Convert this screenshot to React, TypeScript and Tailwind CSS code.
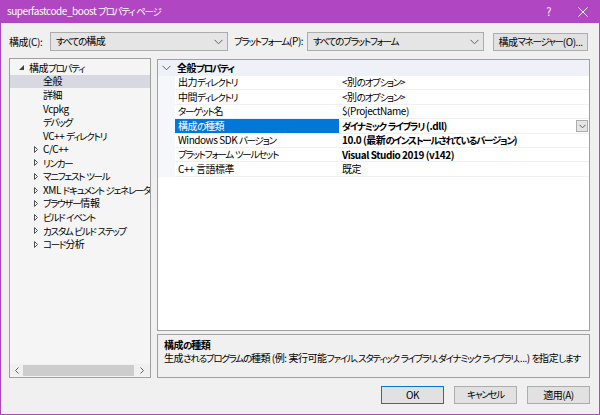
import React from "react";

const FONT =
  "[font-family:'Noto_Sans_CJK_JP',sans-serif] [font-feature-settings:'palt'] text-[10px] tracking-[-0.45px] leading-none";

// kana runs are set tighter, like the narrow kana of the Windows UI font
function J({ t }: { t: string }) {
  const parts = t.split(/([\u3000-\u30ff]+)/);
  return (
    <>
      {parts.map((p, i) =>
        i % 2 === 1 ? (
          <span key={i} className="text-[9.5px] tracking-[-1.25px]">
            {p}
          </span>
        ) : (
          <React.Fragment key={i}>{p}</React.Fragment>
        ),
      )}
    </>
  );
}

const treeItems: { label: string; expandable?: boolean; selected?: boolean }[] = [
  { label: "全般", selected: true },
  { label: "詳細" },
  { label: "Vcpkg" },
  { label: "デバッグ" },
  { label: "VC++ ディレクトリ" },
  { label: "C/C++", expandable: true },
  { label: "リンカー", expandable: true },
  { label: "マニフェスト ツール", expandable: true },
  { label: "XML ドキュメント ジェネレーター", expandable: true },
  { label: "ブラウザー情報", expandable: true },
  { label: "ビルド イベント", expandable: true },
  { label: "カスタム ビルド ステップ", expandable: true },
  { label: "コード分析", expandable: true },
];

const props: { name: string; value: string; bold?: boolean; selected?: boolean }[] = [
  { name: "出力ディレクトリ", value: "<別のオプション>" },
  { name: "中間ディレクトリ", value: "<別のオプション>" },
  { name: "ターゲット名", value: "$(ProjectName)" },
  { name: "構成の種類", value: "ダイナミック ライブラリ (.dll)", bold: true, selected: true },
  { name: "Windows SDK バージョン", value: "10.0 (最新のインストールされているバージョン)", bold: true },
  { name: "プラットフォーム ツールセット", value: "Visual Studio 2019 (v142)", bold: true },
  { name: "C++ 言語標準", value: "既定" },
];

function Chevron() {
  return (
    <svg width="9" height="6" viewBox="0 0 9 6" className="shrink-0">
      <path d="M0.5 0.8 L4.5 4.8 L8.5 0.8" fill="none" stroke="#606060" strokeWidth="1" />
    </svg>
  );
}

function Combo({ text, width }: { text: string; width: string }) {
  return (
    <div className={`${width} shrink-0 h-[19px] bg-[#e5e5e5] border border-[#acacac] flex items-center pl-[5px] pr-[4px]`}>
      <span className="flex-1 whitespace-nowrap">
        <J t={text} />
      </span>
      <Chevron />
    </div>
  );
}

function Btn({ label, w, focused }: { label: string; w: string; focused?: boolean }) {
  return (
    <div
      className={`${w} shrink-0 h-[18px] bg-[#e1e1e1] border ${focused ? "border-[#0078d7]" : "border-[#adadad]"} flex items-center justify-center whitespace-nowrap`}
    >
      <J t={label} />
    </div>
  );
}

export default function App() {
  return (
    <div className={`w-[600px] h-[415px] bg-[#b146c2] flex flex-col text-black ${FONT}`}>
      {/* title bar */}
      <div className="h-[23px] flex items-center pl-[7px] pr-[12px] text-white shrink-0">
        <span className="flex-1 whitespace-nowrap">
          <J t="superfastcode_boost プロパティ ページ" />
        </span>
        <span className="text-[11px] mr-[27px]">?</span>
        <svg width="10" height="10" viewBox="0 0 10 10">
          <path d="M0.5 0.5 L9.5 9.5 M9.5 0.5 L0.5 9.5" stroke="white" strokeWidth="1" />
        </svg>
      </div>

      {/* body */}
      <div className="flex-1 mx-[1px] mb-[1px] bg-[#f0f0f0] flex flex-col pl-[8px] pr-[9px] pt-[9px]">
        {/* top row */}
        <div className="flex items-center h-[19px]">
          <span className="w-[41px] shrink-0 whitespace-nowrap">
            <J t="構成(C):" />
          </span>
          <Combo text="すべての構成" width="w-[178px]" />
          <span className="ml-[6px] w-[73px] shrink-0 whitespace-nowrap">
            <J t="プラットフォーム(P):" />
          </span>
          <Combo text="すべてのプラットフォーム" width="w-[177px]" />
          <div className="ml-[9px]">
            <Btn label="構成マネージャー(O)..." w="w-[95px]" />
          </div>
        </div>

        {/* main */}
        <div className="flex mt-[7px] gap-[6px] h-[320px]">
          {/* tree */}
          <div className="w-[142px] shrink-0 h-[320px] bg-[#f5f5f5] border border-[#a0a0a0] flex flex-col">
            <div className="flex-1 pt-[2px] overflow-hidden">
              <div className="h-[13.6px] flex items-center whitespace-nowrap">
                <svg width="5" height="5" viewBox="0 0 5 5" className="ml-[9px] mr-[5px] shrink-0">
                  <path d="M5 0 L5 5 L0 5 Z" fill="#404040" />
                </svg>
                <span>
                  <J t="構成プロパティ" />
                </span>
              </div>
              {treeItems.map((it) => (
                <div
                  key={it.label}
                  className={`h-[13.6px] flex items-center whitespace-nowrap ${it.selected ? "bg-[#d7d8e2]" : ""}`}
                >
                  <span className="w-[33px] shrink-0 flex justify-end pr-[5px]">
                    {it.expandable && (
                      <svg width="4" height="7" viewBox="0 0 4 7">
                        <path d="M0.5 0.5 L3.5 3.5 L0.5 6.5 Z" fill="none" stroke="#505050" strokeWidth="1" />
                      </svg>
                    )}
                  </span>
                  <span>
                    <J t={it.label} />
                  </span>
                </div>
              ))}
            </div>
            {/* h scrollbar */}
            <div className="h-[12px] mb-[1px] flex items-center bg-[#f0f0f0] shrink-0">
              <span className="w-[13px] flex justify-center">
                <svg width="4" height="7" viewBox="0 0 4 7">
                  <path d="M3.5 0.5 L0.5 3.5 L3.5 6.5" fill="none" stroke="#606060" strokeWidth="1" />
                </svg>
              </span>
              <div className="w-[111px] h-[11px] bg-[#cdcdcd]" />
              <span className="flex-1 flex justify-center">
                <svg width="4" height="7" viewBox="0 0 4 7">
                  <path d="M0.5 0.5 L3.5 3.5 L0.5 6.5" fill="none" stroke="#606060" strokeWidth="1" />
                </svg>
              </span>
            </div>
          </div>

          {/* right side */}
          <div className="flex-1 min-w-0 flex flex-col gap-[3px]">
            {/* property grid */}
            <div className="h-[275px] bg-white border border-[#a0a0a0] flex flex-col mt-[1px]">
              <div className="h-[16px] bg-[#eef1f7] flex items-center font-bold">
                <span className="w-[17px] flex justify-center">
                  <Chevron />
                </span>
                <span className="ml-[2px]">
                  <J t="全般プロパティ" />
                </span>
              </div>
              <div className="flex">
                <div className="w-[17px] bg-[#f5f7fb]" />
                <div className="flex-1 flex flex-col">
                  {props.map((p) => (
                    <div key={p.name} className="h-[14.4px] flex border-b border-[#f0f0f0] whitespace-nowrap">
                      <div
                        className={`w-[164px] shrink-0 flex items-center pl-[3px] ${p.selected ? "bg-[#0078d7] text-white" : ""}`}
                      >
                        <span>
                          <J t={p.name} />
                        </span>
                      </div>
                      <div className="flex-1 flex items-center pl-[3px] relative">
                        <span className={p.bold ? "font-bold" : ""}>
                          <J t={p.value} />
                        </span>
                        {p.selected && (
                          <div className="absolute right-[1px] top-[1px] w-[12px] h-[12px] bg-[#e5e5e5] border border-[#acacac] flex items-center justify-center">
                            <svg width="7" height="5" viewBox="0 0 7 5">
                              <path d="M0.5 0.8 L3.5 3.8 L6.5 0.8" fill="none" stroke="#606060" strokeWidth="1" />
                            </svg>
                          </div>
                        )}
                      </div>
                    </div>
                  ))}
                </div>
              </div>
            </div>

            {/* description */}
            <div className="h-[44px] bg-[#f0f0f0] border border-[#a0a0a0] px-[6px] pt-[3px] whitespace-nowrap overflow-hidden">
              <div className="font-bold h-[13px] flex items-center">
                <span>
                  <J t="構成の種類" />
                </span>
              </div>
              <div className="h-[13px] flex items-center">
                <span>
                  <J t="生成されるプログラムの種類 (例: 実行可能ファイル、スタティック ライブラリ、ダイナミック ライブラリ、...) を指定します" />
                </span>
              </div>
            </div>
          </div>
        </div>

        {/* buttons */}
        <div className="flex justify-end gap-[10px] mt-[8px]">
          <Btn label="OK" w="w-[63px]" focused />
          <Btn label="キャンセル" w="w-[63px]" />
          <Btn label="適用(A)" w="w-[63px]" />
        </div>
      </div>
    </div>
  );
}
